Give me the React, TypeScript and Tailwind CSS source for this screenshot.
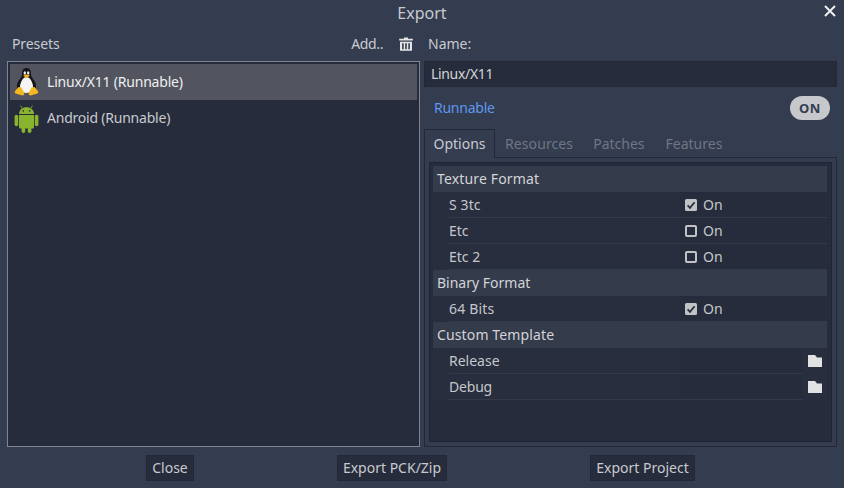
const font = { fontFamily: '"Noto Sans", sans-serif' };

function Tux() {
  return (
    <svg width="26" height="30" viewBox="0 0 26 30" className="shrink-0">
      <path d="M13.5 1C10 1 9 4 9 7C9 10 7.5 11 5.5 14C3.5 17 3.5 20 5 24L22 24C23.5 20 23.5 17 21.5 14C19.5 11 18 10 18 7C18 4 17 1 13.5 1Z" fill="#15151a" />
      <path d="M13.5 10C10 10 7.5 15 7 19C6.8 23 9.5 26 13.5 26C17.5 26 20.2 23 20 19C19.5 15 17 10 13.5 10Z" fill="#f4f4f4" />
      <ellipse cx="11.8" cy="6" rx="1.2" ry="1.7" fill="#eee" />
      <ellipse cx="15.2" cy="6" rx="1.2" ry="1.7" fill="#eee" />
      <path d="M10 8.6L13.5 7.5L17 8.6L13.5 11.2Z" fill="#f2b01e" />
      <path d="M5.5 20L2.2 24C1.2 25.6 1.8 26.4 3.4 26.8L9.5 28.4C11.2 28.4 11.8 27 11 25.6L8.5 20.5Z" fill="#f5b81f" />
      <path d="M21.5 20L24.8 24C25.8 25.6 25.2 26.4 23.6 26.8L17.5 28.4C15.8 28.4 15.2 27 16 25.6L18.5 20.5Z" fill="#f5b81f" />
    </svg>
  );
}

function Droid() {
  return (
    <svg width="26" height="30" viewBox="0 0 26 30" className="shrink-0">
      <g fill="#8ab32f">
        <path d="M6 11C6.2 6.8 9.2 4.2 13.5 4.2C17.8 4.2 20.8 6.8 21 11Z" />
        <path d="M6 12H21V24C21 25 20.4 25.6 19.4 25.6H7.6C6.6 25.6 6 25 6 24Z" />
        <rect x="1.6" y="11.8" width="3.6" height="11.5" rx="1.8" />
        <rect x="21.8" y="11.8" width="3.6" height="11.5" rx="1.8" />
        <rect x="8.6" y="24" width="3.6" height="6" rx="1.8" />
        <rect x="14.8" y="24" width="3.6" height="6" rx="1.8" />
      </g>
      <path d="M9 5L7.6 2.6M18 5L19.4 2.6" stroke="#8ab32f" strokeWidth="0.8" />
      <circle cx="10.3" cy="7.8" r="0.85" fill="#2a3040" />
      <circle cx="16.7" cy="7.8" r="0.85" fill="#2a3040" />
    </svg>
  );
}

function Trash() {
  return (
    <svg width="14" height="14" viewBox="0 0 14 14" fill="#e4e4e4" className="block">
      <path d="M5 0.5H9V1.8H13.8V3.6H0.2V1.8H5Z" />
      <path d="M1 4.8H13V13.8H1ZM3.1 6.3V12.3H4.7V6.3ZM6.2 6.3V12.3H7.8V6.3ZM9.3 6.3V12.3H10.9V6.3Z" fillRule="evenodd" />
    </svg>
  );
}

function Folder() {
  return (
    <svg width="14" height="12" viewBox="0 0 14 12" className="absolute right-[5px] top-[7px]" fill="#e2e2e2">
      <path d="M0 0H7L9 2.5H14V12H0Z" />
    </svg>
  );
}

function Check({ on }: { on: boolean }) {
  return on ? (
    <svg width="12" height="12" viewBox="0 0 12 12" className="shrink-0">
      <rect width="12" height="12" rx="1.5" fill="#c0c2c6" />
      <path d="M2.6 6.4L5 8.8L9.6 3.2" stroke="#2a3040" strokeWidth="1.8" fill="none" />
    </svg>
  ) : (
    <span className="block h-3 w-3 shrink-0 rounded-[2px] border-2 border-[#c0c2c6]" />
  );
}

function Section({ label, track }: { label: string; track: string }) {
  return (
    <div className={`flex h-[26px] items-center bg-[#343b4b] pl-1 text-[#d2d4d8] ${track}`}>{label}</div>
  );
}

function Row({ label, on, folder, track }: { label: string; on?: boolean; folder?: boolean; track?: string }) {
  return (
    <div className="relative flex h-[26px] bg-[#282e3d] pl-[16px] text-[#c4c7cc]">
      <div className={`flex flex-1 border-b border-[#333a4b] ${folder ? "mr-[25px]" : ""}`}>
        <div className={`flex w-[230px] items-center ${track ?? ""}`}>{label}</div>
        <div className="flex flex-1 items-center gap-[6px] bg-[#262c3b] pl-[6px]">
          {on !== undefined && <Check on={on} />}
          {on !== undefined && <span>On</span>}
        </div>
      </div>
      {folder && <span className="absolute right-0 top-0 h-[26px] w-[19px]"><Folder /></span>}
    </div>
  );
}

function FooterButton({ label, w }: { label: string; w: string }) {
  return (
    <button className={`flex h-[26px] items-center justify-center border border-[#222836] bg-[#262c3b] text-[#c8cacf] ${w}`}>
      {label}
    </button>
  );
}

export default function App() {
  return (
    <div className="flex h-[488px] w-[844px] flex-col overflow-hidden bg-[#343c50] text-[14px] leading-[20px]" style={font}>
      <header className="relative flex h-[25px] items-center justify-center text-[16px] text-[#c8cacf]">
        Export
        <svg width="12" height="12" viewBox="0 0 12 12" className="absolute right-[8px] top-[5px]">
          <path d="M1 1L11 11M11 1L1 11" stroke="#f0f0f0" strokeWidth="2" />
        </svg>
      </header>
      <main className="flex h-[422px] gap-[4px] px-[7px]">
        <section className="flex w-[413px] flex-col">
          <div className="flex h-[36px] items-center pl-[5px] pr-[7px] pt-[2px] text-[#c8cacf]">
            <span className="tracking-[-0.1px]">Presets</span>
            <span className="ml-auto tracking-[-0.4px]">Add..</span>
            <span className="ml-[16px]"><Trash /></span>
          </div>
          <div className="flex-1 border border-[#7d8492] bg-[#262c3b] p-[2px]">
            <div className="flex h-[36px] items-center gap-[8px] bg-[#52555f] pl-[3px] tracking-[-0.2px] text-[#eeeff1]">
              <Tux />
              Linux/X11 (Runnable)
            </div>
            <div className="flex h-[36px] items-center gap-[8px] pl-[3px] tracking-[-0.22px] text-[#c8cacf]">
              <Droid />
              Android (Runnable)
            </div>
          </div>
        </section>
        <section className="flex w-[413px] flex-col">
          <div className="flex h-[36px] items-center pl-[4px] pt-[2px] text-[#c8cacf]">Name:</div>
          <div className="flex h-[26px] items-center border border-[#222836] bg-[#262c3b] pl-[6px] tracking-[-0.33px] text-[#d2d4d8]">Linux/X11</div>
          <div className="flex h-[42px] items-center justify-between pl-[10px] pr-[7px] text-[#5f97ee]">
            <span className="tracking-[-0.25px]">Runnable</span>
            <span className="flex h-[24px] w-[40px] items-center justify-center rounded-full bg-[#c6c8cc] text-[13px] font-bold tracking-[0.5px] text-[#343c50]">ON</span>
          </div>
          <div className="flex h-[29px]">
            <div className="z-10 flex h-[29px] w-[71px] items-center justify-center border border-b-0 border-[#222836] bg-[#343c50] text-[#c8cacf]">Options</div>
            <div className="flex items-center pl-[10px] text-[#6f7685]">
              <span className="tracking-[0.1px]">Resources</span>
              <span className="ml-[20px]">Patches</span>
              <span className="ml-[21px]">Features</span>
            </div>
          </div>
          <div className="-mt-px flex-1 border border-[#222836] p-[4px]">
            <div className="h-full border border-[#1f2533] bg-[#262c3b] p-[3px] pr-[4px]">
              <Section label="Texture Format" track="tracking-[0.15px]" />
              <Row label="S 3tc" on track="tracking-[0.1px]" />
              <Row label="Etc" on={false} />
              <Row label="Etc 2" on={false} />
              <Section label="Binary Format" track="" />
              <Row label="64 Bits" on track="tracking-[0.2px]" />
              <Section label="Custom Template" track="tracking-[0.13px]" />
              <Row label="Release" folder />
              <Row label="Debug" folder track="tracking-[-0.2px]" />
            </div>
          </div>
        </section>
      </main>
      <footer className="flex items-start gap-[143px] pl-[146px] pt-[8px]">
        <FooterButton label="Close" w="w-[48px]" />
        <FooterButton label="Export PCK/Zip" w="w-[110px]" />
        <FooterButton label="Export Project" w="w-[105px]" />
      </footer>
    </div>
  );
}
